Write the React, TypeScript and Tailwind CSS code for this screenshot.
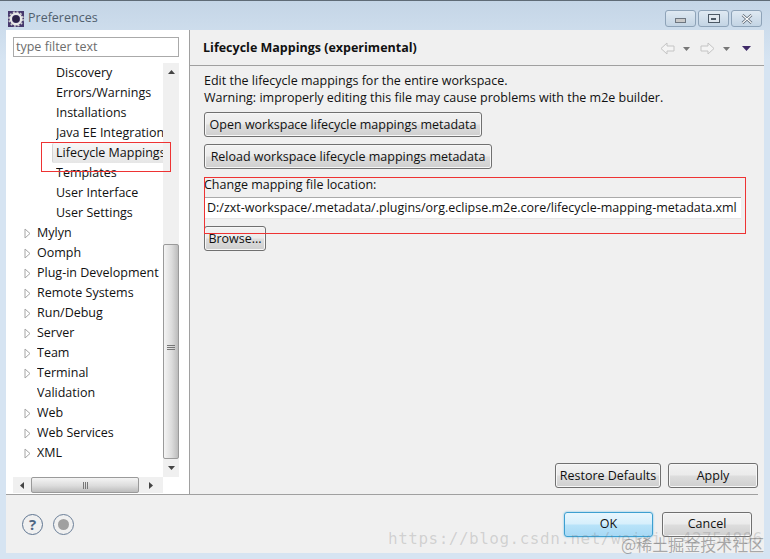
import { ReactNode } from 'react';

const FONT = 'font-["Open_Sans","Noto_Sans",sans-serif]';

type TreeItem = { label: string; child?: boolean; arrow?: boolean; selected?: boolean };

const TREE: TreeItem[] = [
    { label: 'Discovery', child: true },
    { label: 'Errors/Warnings', child: true },
    { label: 'Installations', child: true },
    { label: 'Java EE Integration', child: true },
    { label: 'Lifecycle Mappings', child: true, selected: true },
    { label: 'Templates', child: true },
    { label: 'User Interface', child: true },
    { label: 'User Settings', child: true },
    { label: 'Mylyn', arrow: true },
    { label: 'Oomph', arrow: true },
    { label: 'Plug-in Development', arrow: true },
    { label: 'Remote Systems', arrow: true },
    { label: 'Run/Debug', arrow: true },
    { label: 'Server', arrow: true },
    { label: 'Team', arrow: true },
    { label: 'Terminal', arrow: true },
    { label: 'Validation' },
    { label: 'Web', arrow: true },
    { label: 'Web Services', arrow: true },
    { label: 'XML', arrow: true },
];

function Btn({ children, className = '' }: { children: ReactNode; className?: string }) {
    return (
        <button className={`h-[25px] shrink-0 whitespace-nowrap rounded-[3px] border border-[#707070] bg-[linear-gradient(#f2f2f2_0%,#ebebeb_48%,#dddddd_52%,#cfcfcf_100%)] text-[12.5px] leading-[22px] text-[#111] shadow-[inset_0_0_0_1px_#f7f7f7] ${className}`}>
            {children}
        </button>
    );
}

function WinBtn({ children, className = '' }: { children: ReactNode; className?: string }) {
    return (
        <div className={`flex h-[17px] items-center justify-center rounded-[3px] border border-[#8ea3b8] bg-[linear-gradient(#dfe9f2,#c3d4e4)] ${className}`}>
            {children}
        </div>
    );
}

function TreeRow({ item }: { item: TreeItem }) {
    return (
        <div className="flex h-[20px] items-center whitespace-nowrap text-[12.5px] text-[#111]">
            <div className="flex w-[24px] shrink-0 justify-end pr-[6px]">
                {item.arrow && (
                    <svg width="7" height="11" viewBox="0 0 7 11">
                        <path d="M1 1 L6 5.5 L1 10 Z" fill="#fff" stroke="#a6a6a6" />
                    </svg>
                )}
            </div>
            {item.child && <div className="w-[19px] shrink-0" />}
            <div className={item.selected ? 'ml-[-4px] flex h-[20px] flex-1 items-center overflow-hidden rounded-l-[2px] border-l border-[#d5d5d5] bg-[linear-gradient(#f7f7f7,#e6e6e6)] pl-[3px]' : 'flex-1 overflow-hidden'}>
                {item.label}
            </div>
        </div>
    );
}

function Tri({ dir, color = '#444' }: { dir: 'up' | 'down' | 'left' | 'right'; color?: string }) {
    const d = { up: 'M0 4 L3.5 0 L7 4 Z', down: 'M0 0 L7 0 L3.5 4 Z', left: 'M4 0 L4 7 L0 3.5 Z', right: 'M0 0 L0 7 L4 3.5 Z' }[dir];
    const vertical = dir === 'up' || dir === 'down';
    return (
        <svg width={vertical ? 7 : 4} height={vertical ? 4 : 7} viewBox={vertical ? '0 0 7 4' : '0 0 4 7'} className="block">
            <path d={d} fill={color} />
        </svg>
    );
}

function NavArrow({ flip }: { flip?: boolean }) {
    return (
        <svg width="15" height="13" viewBox="0 0 15 13" className={flip ? 'block -scale-x-100' : 'block'}>
            <path d="M1 6.5 L7 1 V4 H14 V9 H7 V12 Z" fill="#f4f4f4" stroke="#c4c4c4" />
        </svg>
    );
}

export default function App() {
    return (
        <div className={`relative flex h-[559px] w-[770px] flex-col overflow-hidden bg-[linear-gradient(#c4d5e6,#d6e4f2_60px)] ${FONT}`}>
            {/* Title bar */}
            <div className="flex h-[30px] shrink-0 items-center border-t border-[#5f6b76] px-[8px] pt-[6px]">
                <svg width="16" height="16" viewBox="0 0 16 16" className="shrink-0">
                    <rect width="16" height="16" fill="#47396e" />
                    <circle cx="8" cy="8" r="5.2" fill="none" stroke="#e8e8e8" strokeWidth="2.4" />
                    <circle cx="8" cy="8" r="7" fill="none" stroke="#d0d0d0" strokeWidth="1.6" strokeDasharray="2 1.7" />
                    <circle cx="8" cy="8" r="3.4" fill="#2b2346" />
                </svg>
                <span className="ml-[4px] text-[12.5px] text-[#51606e]">Preferences</span>
                <div className="ml-auto flex gap-[2px]">
                    <WinBtn className="w-[31px]"><div className="mt-[4px] h-[5px] w-[11px] border border-[#6d7680] bg-[#c9c9c9]" /></WinBtn>
                    <WinBtn className="w-[31px]"><div className="flex h-[9px] w-[12px] items-center justify-center border-[1.5px] border-[#4c5966] bg-[#dfe7ef]"><div className="h-[2px] w-[5px] bg-[#4c5966]" /></div></WinBtn>
                    <WinBtn className="w-[31px]">
                        <svg width="12" height="10" viewBox="0 0 12 10"><path d="M1.5 1 L10.5 9 M10.5 1 L1.5 9" stroke="#566270" strokeWidth="2.6" /><path d="M1.5 1 L10.5 9 M10.5 1 L1.5 9" stroke="#fff" strokeWidth="1.1" /></svg>
                    </WinBtn>
                </div>
            </div>

            {/* Dialog body */}
            <div className="mx-[6px] mb-[6px] flex min-h-0 flex-1 flex-col bg-[#f0f0f0]">
                <div className="flex min-h-0 flex-1">
                    {/* Left: filter and tree */}
                    <div className="flex w-[184px] shrink-0 flex-col border-b border-r border-[#a0a0a0] bg-white pb-[1px] pl-[7px] pr-[10px] pt-[7px]">
                        <div className="flex h-[20px] shrink-0 items-center border border-[#aaa] pl-[2px] text-[12.5px] text-[#6d6d6d]">type filter text</div>
                        <div className="mt-[6px] flex min-h-0 flex-1">
                            <div className="min-w-0 flex-1 overflow-hidden">
                                {TREE.map((item) => <TreeRow key={item.label} item={item} />)}
                            </div>
                            <div className="flex w-[16px] shrink-0 flex-col bg-[#f0f0f0]">
                                <div className="flex h-[18px] items-center justify-center"><Tri dir="up" /></div>
                                <div className="mt-[163px] h-[215px] rounded-[2px] border border-[#9a9a9a] bg-[linear-gradient(90deg,#f4f4f4,#dcdcdc_55%,#bcbcbc)]">
                                    <div className="ml-[3px] mt-[100px] flex w-[8px] flex-col gap-[1px]">
                                        <div className="h-px bg-[#777]" /><div className="h-px bg-[#777]" /><div className="h-px bg-[#777]" />
                                    </div>
                                </div>
                                <div className="flex flex-1 items-center justify-center"><Tri dir="down" /></div>
                            </div>
                        </div>
                        <div className="flex h-[16px] shrink-0 items-center">
                            <div className="flex h-[16px] w-[150px] items-center bg-[#f0f0f0]">
                                <div className="flex w-[18px] justify-center"><Tri dir="left" /></div>
                                <div className="flex h-[16px] w-[108px] items-center justify-center gap-[1px] rounded-[2px] border border-[#9a9a9a] bg-[linear-gradient(#f4f4f4,#dcdcdc_55%,#bcbcbc)]">
                                    <div className="h-[7px] w-px bg-[#777]" /><div className="h-[7px] w-px bg-[#777]" /><div className="h-[7px] w-px bg-[#777]" />
                                </div>
                                <div className="flex w-[24px] justify-center"><Tri dir="right" /></div>
                            </div>
                        </div>
                    </div>

                    {/* Right: page */}
                    <div className="flex min-w-0 flex-1 flex-col">
                        <div className="flex h-[36px] shrink-0 items-center justify-between border-b border-[#a0a0a0] pl-[13px] pr-[13px] pt-[2px]">
                            <span className="text-[12.5px] font-bold text-[#111]">Lifecycle Mappings (experimental)</span>
                            <div className="flex items-center">
                                <NavArrow />
                                <div className="ml-[8px]"><Tri dir="down" color="#777" /></div>
                                <div className="ml-[10px]"><NavArrow flip /></div>
                                <div className="ml-[8px]"><Tri dir="down" color="#777" /></div>
                                <div className="ml-[12px]"><svg width="9" height="5" viewBox="0 0 9 5" className="block"><path d="M0 0 H9 L4.5 5 Z" fill="#3f2a68" /></svg></div>
                            </div>
                        </div>
                        <div className="mr-[6px] flex min-h-0 flex-1 flex-col items-start border-b border-[#a0a0a0] pl-[14px] pt-[6px] text-[12.5px] text-[#111]">
                            <p className="h-[17px] leading-[17px]">Edit the lifecycle mappings for the entire workspace.</p>
                            <p className="h-[17px] leading-[17px]">Warning: improperly editing this file may cause problems with the m2e builder.</p>
                            <Btn className="mt-[6px] w-[278px]">Open workspace lifecycle mappings metadata</Btn>
                            <Btn className="mt-[7px] w-[288px]">Reload workspace lifecycle mappings metadata</Btn>
                            <p className="mt-[7px] h-[17px] leading-[17px]">Change mapping file location:</p>
                            <div className="mt-[4px] flex h-[22px] w-[537px] items-center whitespace-nowrap border-t border-[#aaa] bg-white pl-[3px] shadow-[inset_0_-1px_0_#e6e6e6]">D:/zxt-workspace/.metadata/.plugins/org.eclipse.m2e.core/lifecycle-mapping-metadata.xml</div>
                            <Btn className="mt-[7px] w-[62px]">Browse...</Btn>
                            <div className="mt-auto flex gap-[7px] self-end pb-[6px]">
                                <Btn className="w-[106px]">Restore Defaults</Btn>
                                <Btn className="w-[90px]">Apply</Btn>
                            </div>
                        </div>
                    </div>
                </div>

                {/* Footer */}
                <div className="flex h-[58px] shrink-0 items-center pl-[16px] pr-[12px]">
                    <div className="flex h-[21px] w-[21px] items-center justify-center rounded-full border-[1.5px] border-[#5f7591] text-[15px] font-bold text-[#4f6684]">?</div>
                    <div className="ml-[10px] flex h-[21px] w-[21px] items-center justify-center rounded-full border border-[#6b7f98]">
                        <div className="h-[11px] w-[11px] rounded-full bg-[#a0a0a0]" />
                    </div>
                    <div className="ml-auto flex gap-[9px]">
                        <button className="h-[25px] w-[89px] rounded-[3px] border border-[#3c9fd0] bg-[linear-gradient(#e8f6fd_0%,#d6effc_48%,#b8e3f9_52%,#a7d9f5_100%)] text-[12.5px] text-[#111] shadow-[0_0_2px_#5bb8e8]">OK</button>
                        <Btn className="w-[90px]">Cancel</Btn>
                    </div>
                </div>
            </div>

            {/* Red annotation boxes */}
            <div className="pointer-events-none absolute left-[41px] top-[142px] h-[30px] w-[130px] border border-[#ee3333]" />
            <div className="pointer-events-none absolute left-[204px] top-[177px] h-[57px] w-[542px] border border-[#ee3333]" />

            {/* Watermarks */}
            <div className="pointer-events-none absolute left-[388px] top-[528px] whitespace-nowrap font-['DejaVu_Sans_Mono',monospace] text-[16px] leading-[22px] tracking-[0.5px] text-[#77777744]">https://blog.csdn.net/weixin_42754896</div>
            <div className="pointer-events-none absolute left-[621px] top-[534px] whitespace-nowrap font-['Noto_Sans_CJK_SC',sans-serif] text-[16px] leading-[20px] text-[#55555577]">@稀土掘金技术社区</div>
        </div>
    );
}
